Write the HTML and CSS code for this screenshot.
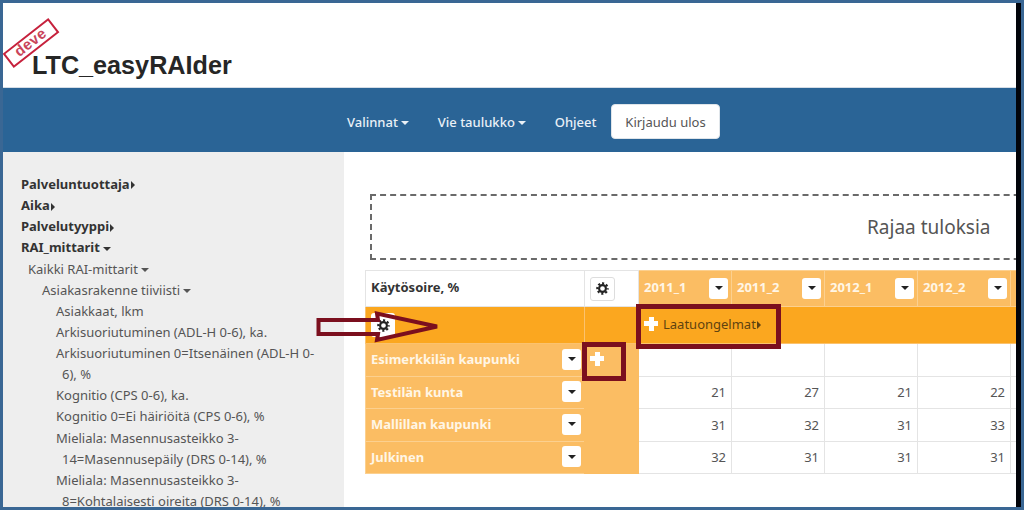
FILE: index.html
```html
<!DOCTYPE html>
<html lang="fi">
<head>
<meta charset="utf-8">
<title>LTC_easyRAIder</title>
<link rel="stylesheet" href="styles.css">
</head>
<body>
<svg class="defs" width="0" height="0" aria-hidden="true">
  <symbol id="cog" viewBox="0 0 16 16">
    <circle cx="8" cy="8" r="4.2" fill="none" stroke="currentColor" stroke-width="2.6"/>
    <circle cx="8" cy="8" r="6.4" fill="none" stroke="currentColor" stroke-width="2.6" stroke-dasharray="2.6 2.42" stroke-dashoffset="1.3"/>
  </symbol>
</svg>
<div class="frame">
  <header class="top">
    <span class="stamp">deve</span>
    <h1 class="brand">LTC_easyRAIder</h1>
  </header>
  <nav class="nav">
    <a class="nav-item">Valinnat <i class="caret down"></i></a>
    <a class="nav-item">Vie taulukko <i class="caret down"></i></a>
    <a class="nav-item">Ohjeet</a>
    <button class="logout">Kirjaudu ulos</button>
  </nav>
  <div class="content">
    <aside class="side">
      <ul class="tree">
        <li class="l0">Palveluntuottaja<i class="caret right"></i></li>
        <li class="l0">Aika<i class="caret right"></i></li>
        <li class="l0">Palvelutyyppi<i class="caret right"></i></li>
        <li class="l0">RAI_mittarit <i class="caret down"></i></li>
        <li class="l1">Kaikki RAI-mittarit <i class="caret down"></i></li>
        <li class="l2">Asiakasrakenne tiiviisti <i class="caret down"></i></li>
        <li class="l3">Asiakkaat, lkm</li>
        <li class="l3">Arkisuoriutuminen (ADL-H 0-6), ka.</li>
        <li class="l3">Arkisuoriutuminen 0=Itsenäinen (ADL-H 0-6), %</li>
        <li class="l3">Kognitio (CPS 0-6), ka.</li>
        <li class="l3">Kognitio 0=Ei häiriöitä (CPS 0-6), %</li>
        <li class="l3">Mieliala: Masennusasteikko 3-14=Masennusepäily (DRS 0-14), %</li>
        <li class="l3">Mieliala: Masennusasteikko 3-8=Kohtalaisesti oireita (DRS 0-14), %</li>
      </ul>
    </aside>
    <main class="main">
      <section class="filter"><span class="filter-title">Rajaa tuloksia</span></section>
      <table class="pivot">
        <colgroup>
          <col class="c-label"><col class="c-plus"><col class="c-year"><col class="c-year"><col class="c-year"><col class="c-year"><col class="c-rest">
        </colgroup>
        <tr class="r-head">
          <th class="measure">Käytösoire, %</th>
          <td class="gear-cell"><button class="btn gear"><svg class="cog"><use href="#cog"/></svg></button></td>
          <th class="year"><div class="cell-row">2011_1<button class="btn drop"><i class="caret down"></i></button></div></th>
          <th class="year"><div class="cell-row">2011_2<button class="btn drop"><i class="caret down"></i></button></div></th>
          <th class="year"><div class="cell-row">2012_1<button class="btn drop"><i class="caret down"></i></button></div></th>
          <th class="year"><div class="cell-row">2012_2<button class="btn drop"><i class="caret down"></i></button></div></th>
          <th class="year"></th>
        </tr>
        <tr class="r-group">
          <td><button class="btn gear small"><svg class="cog"><use href="#cog"/></svg></button></td>
          <td></td>
          <td class="group-cell" colspan="5"><span class="plus"></span><span class="group-label">Laatuongelmat<i class="caret right"></i></span></td>
        </tr>
        <tr class="r-data">
          <th class="place"><div class="cell-row">Esimerkkilän kaupunki<button class="btn drop"><i class="caret down"></i></button></div></th>
          <td class="plus-col" rowspan="4"><span class="plus"></span></td>
          <td></td><td></td><td></td><td></td><td></td>
        </tr>
        <tr class="r-data">
          <th class="place"><div class="cell-row">Testilän kunta<button class="btn drop"><i class="caret down"></i></button></div></th>
          <td>21</td><td>27</td><td>21</td><td>22</td><td></td>
        </tr>
        <tr class="r-data">
          <th class="place"><div class="cell-row">Mallillan kaupunki<button class="btn drop"><i class="caret down"></i></button></div></th>
          <td>31</td><td>32</td><td>31</td><td>33</td><td></td>
        </tr>
        <tr class="r-data">
          <th class="place"><div class="cell-row">Julkinen<button class="btn drop"><i class="caret down"></i></button></div></th>
          <td>32</td><td>31</td><td>31</td><td>31</td><td></td>
        </tr>
      </table>
    </main>
    <svg class="annot" viewBox="0 0 1013 355" width="1013" height="355" aria-hidden="true">
      <path class="mark" d="M315.500 168H375L374 161.500L434 174.500L374 188L375 182H315.500Z"/>
      <rect class="mark thick" x="581.500" y="192.500" width="39" height="34"/>
      <rect class="mark thick" x="635.500" y="154.500" width="140" height="40"/>
    </svg>
  </div>
</div>
</body>
</html>
```
FILE: styles.css
```css
* { box-sizing: border-box; }
html, body { margin: 0; padding: 0; }
body { width: 1024px; height: 510px; overflow: hidden; background: #fff; font-family: "Noto Sans", "Liberation Sans", sans-serif; font-size: 13px; color: #555; }
.defs { position: absolute; }
.frame { width: 1024px; height: 510px; border: 3px solid #3a6794; display: flex; flex-direction: column; overflow: hidden; position: relative; }
.frame::after { content: ""; position: absolute; top: 0; bottom: 0; right: 0; width: 5px; background: #02040a; }
.top { height: 85px; flex: none; background: #fff; position: relative; border-bottom: 1px solid #d5dde6; }
.brand { margin: 0; position: absolute; left: 29px; top: 47px; font: bold 25.200px/30px "Liberation Sans", sans-serif; color: #262626; }
.stamp { position: absolute; left: -1px; top: 31px; width: 58px; height: 18px; border: 2.500px solid #c6213c; color: #c9445a; font: bold 15px/12px "Liberation Sans", sans-serif; letter-spacing: .5px; text-align: center; transform: rotate(-38deg); }
.nav { height: 64px; flex: none; background: #2a6496; display: flex; align-items: center; padding: 3px 0 0 344px; color: #e9f0f6; }
.nav-item { font-weight: 500; margin-right: 28.500px; white-space: nowrap; }
.logout { width: 109px; height: 35px; margin-left: -14px; background: #fff; border: 1px solid #dfe5ea; border-radius: 4px; color: #555; font: inherit; padding: 0; }
.caret { display: inline-block; width: 0; height: 0; vertical-align: middle; }
.caret.down { border-left: 4px solid transparent; border-right: 4px solid transparent; border-top: 4px solid currentColor; }
.caret.right { border-top: 4px solid transparent; border-bottom: 4px solid transparent; border-left: 4px solid currentColor; margin-left: 1px; }
.content { flex: 1; display: flex; min-height: 0; position: relative; }
.side { width: 341px; flex: none; background: #eee; padding-top: 22px; overflow: hidden; }
.tree { list-style: none; margin: 0; padding: 0 24px 0 0; line-height: 21.130px; }
.tree li { padding-left: 6px; text-indent: -6px; }
.l0 { margin-left: 18px; font-weight: 700; color: #333; }
.l1 { margin-left: 25px; }
.l2 { margin-left: 39px; }
.l3 { margin-left: 53px; }
.main { flex: 1; min-width: 0; overflow: hidden; padding: 42px 0 0 21px; }
.filter { width: 700px; height: 66px; margin-left: 5px; border: 2px dashed #6a6a6a; display: flex; align-items: center; }
.filter-title { margin-left: 495px; font-size: 19px; color: #555; }
.pivot { border-collapse: collapse; table-layout: fixed; width: 740px; margin-top: 10px; }
.c-label { width: 219px; } .c-plus { width: 54px; } .c-year { width: 93px; } .c-rest { width: 95px; }
.pivot td, .pivot th { border: 1px solid #e4e4e4; padding: 0 5px; text-align: left; }
.r-head { height: 36px; }
.r-head th { padding-bottom: 3px; padding-right: 3px; }
.r-head .measure { font-weight: 700; color: #333; background: #fff; }
.year { background: #fbbd63; color: #fff6e6; font-weight: 700; border-color: #fcd08f !important; }
.cell-row { display: flex; align-items: center; justify-content: space-between; white-space: nowrap; }
.btn { background: #fff; border: 0; border-radius: 3px; padding: 0; color: #222; display: inline-flex; align-items: center; justify-content: center; vertical-align: middle; }
.drop { width: 19px; height: 21px; flex: none; position: relative; }
.r-head .drop { top: 1px; }
.gear { width: 25px; height: 24px; border: 1px solid #ddd; }
.gear.small { width: 24px; height: 24px; border: 0; }
.cog { width: 13px; height: 13px; color: #222; }
.r-group { height: 37px; }
.r-group td { background: #fba71f; border-color: #fbc26e; color: #5f4310; }
.r-group .group-cell { padding-bottom: 4px; }
.r-data { height: 32.500px; }
.r-data td { text-align: right; background: #fff; }
.r-data .place { background: #fbbd63; color: #fff6e6; font-weight: 700; border-color: #fcd08f !important; padding: 0 3px 1px 5px; }
.r-data .plus-col { background: #fbbd63; border-color: #fbbd63; text-align: left; vertical-align: top; padding: 4px 0 0 5px; }
.plus { display: inline-block; width: 14px; height: 14px; vertical-align: middle; background: linear-gradient(#fff, #fff) center / 14px 5px no-repeat, linear-gradient(#fff, #fff) center / 5px 14px no-repeat; }
.group-label { margin-left: 5px; vertical-align: middle; }
.annot { position: absolute; left: 0; top: 0; pointer-events: none; }
.mark { fill: none; stroke: #7b0f1e; stroke-width: 4; }
.mark.thick { stroke-width: 5; }
```
